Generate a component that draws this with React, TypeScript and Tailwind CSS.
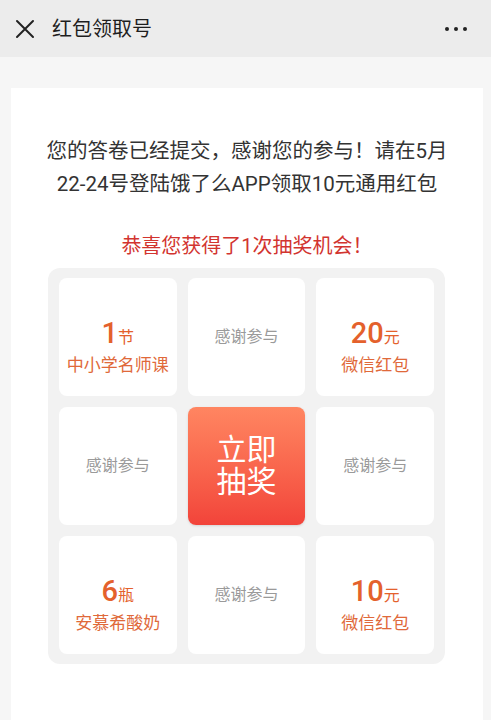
import React from 'react';

const font = { fontFamily: '"Roboto", "Noto Sans CJK SC", sans-serif' };

type Prize = { kind: 'prize'; num: string; unit: string; name: string } | { kind: 'thanks' } | { kind: 'button' };

const cells: Prize[] = [
  { kind: 'prize', num: '1', unit: '节', name: '中小学名师课' },
  { kind: 'thanks' },
  { kind: 'prize', num: '20', unit: '元', name: '微信红包' },
  { kind: 'thanks' },
  { kind: 'button' },
  { kind: 'thanks' },
  { kind: 'prize', num: '6', unit: '瓶', name: '安慕希酸奶' },
  { kind: 'thanks' },
  { kind: 'prize', num: '10', unit: '元', name: '微信红包' },
];

const Cell: React.FC<{ cell: Prize }> = ({ cell }) => {
  if (cell.kind === 'button') {
    return (
      <div className="h-[118px] rounded-lg bg-gradient-to-b from-[#ff8561] to-[#f2433a] flex flex-col items-center justify-center text-white text-[30px] leading-[32px] shadow-sm">
        <span>立即</span>
        <span>抽奖</span>
      </div>
    );
  }
  if (cell.kind === 'thanks') {
    return (
      <div className="h-[118px] rounded-lg bg-white flex items-center justify-center text-[16px] text-[#9a9a9a]">
        感谢参与
      </div>
    );
  }
  return (
    <div className="h-[118px] rounded-lg bg-white flex flex-col items-center justify-center pt-[18px] text-[#e4612c]">
      <div className="flex items-baseline leading-[32px]">
        <span className="text-[29px] font-medium">{cell.num}</span>
        <span className="text-[16px]">{cell.unit}</span>
      </div>
      <div className="text-[17px] leading-[22px] text-[#e0693a]">{cell.name}</div>
    </div>
  );
};

export default function App() {
  return (
    <div className="w-[491px] h-[720px] overflow-hidden bg-[#f6f6f6]" style={font}>
      {/* top bar */}
      <div className="h-[57px] bg-[#ececec] flex items-center px-[14px]">
        <svg width="22" height="22" viewBox="0 0 22 22" className="mr-[16px]">
          <path d="M3 3 L19 19 M19 3 L3 19" stroke="#222" strokeWidth="2" strokeLinecap="round" />
        </svg>
        <span className="text-[20px] text-[#1e1e1e]">红包领取号</span>
        <div className="ml-auto flex gap-[5px] mr-[10px]">
          <span className="w-[4px] h-[4px] rounded-full bg-[#222]" />
          <span className="w-[4px] h-[4px] rounded-full bg-[#222]" />
          <span className="w-[4px] h-[4px] rounded-full bg-[#222]" />
        </div>
      </div>

      <div className="pt-[31px] px-[11px] pr-[8px]">
        <div className="bg-white h-[700px] pt-[47px]">
          <p className="text-center text-[20.5px] leading-[33px] text-[#333]">
            您的答卷已经提交，感谢您的参与！请在5月
            <br />
            22-24号登陆饿了么APP领取10元通用红包
          </p>
          <p className="mt-[31px] text-center text-[20px] leading-[28px] text-[#d2342f]">
            恭喜您获得了1次抽奖机会！
          </p>
          <div className="mt-[8px] ml-[37px] w-[397px] rounded-[12px] bg-[#f2f2f2] p-[11px] py-[10px] grid grid-cols-3 gap-[11px]">
            {cells.map((c, i) => (
              <Cell key={i} cell={c} />
            ))}
          </div>
        </div>
      </div>
    </div>
  );
}
